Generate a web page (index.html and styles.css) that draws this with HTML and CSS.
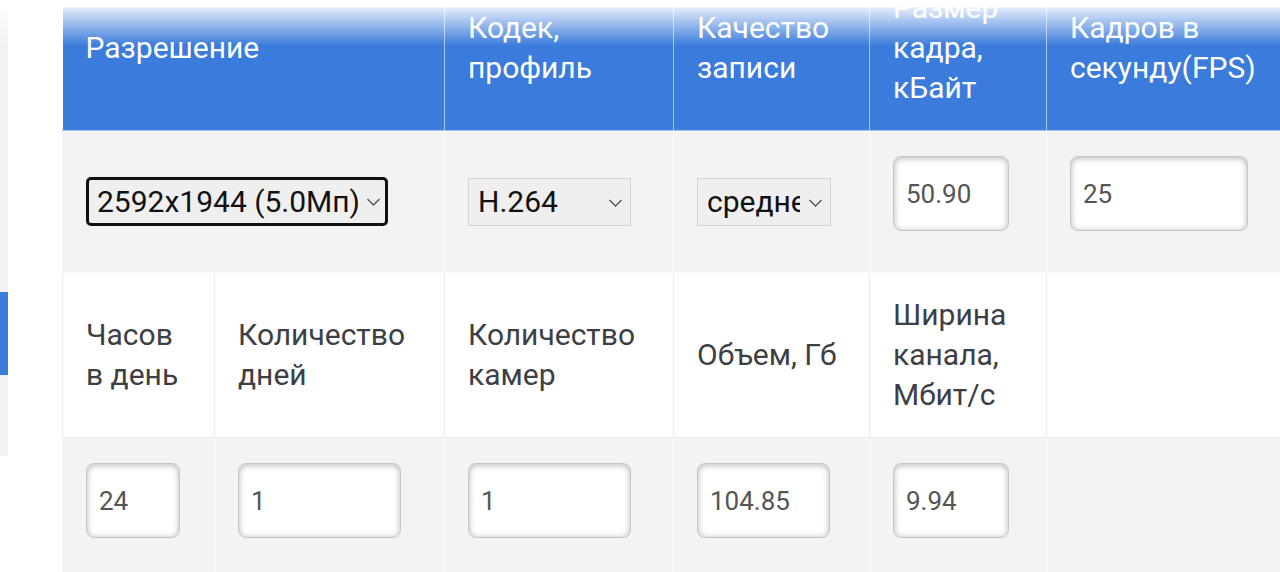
FILE: index.html
```html
<!DOCTYPE html>
<html lang="ru">
<head>
    <meta charset="UTF-8">
    <meta name="viewport" content="width=device-width, initial-scale=1.0">
    <title>Калькулятор архива</title>
    <link rel="stylesheet" href="styles.css">
</head>
<body>
    <div class="fade"></div>
    <aside class="side">
        <div class="side-mark"></div>
    </aside>
    <div class="calc-wrap">
        <table class="calc">
            <colgroup>
                <col class="c1"><col class="c2"><col class="c3"><col class="c4"><col class="c5"><col class="c6">
            </colgroup>
            <tr class="head">
                <th colspan="2">Разрешение</th>
                <th>Кодек, профиль</th>
                <th>Качество записи</th>
                <th>Размер кадра, кБайт</th>
                <th>Кадров в секунду(FPS)</th>
            </tr>
            <tr class="fields">
                <td colspan="2">
                    <div class="select-box focused res">
                        <select>
                            <option>2592x1944 (5.0Мп)</option>
                            <option>1920x1080 (2.0Мп)</option>
                            <option>1280x720 (1.0Мп)</option>
                        </select>
                        <svg class="chev" viewBox="0 0 14 8"><path d="M1 1l6 6 6-6"/></svg>
                    </div>
                </td>
                <td>
                    <div class="select-box codec">
                        <select>
                            <option>H.264</option>
                            <option>H.265</option>
                            <option>MJPEG</option>
                        </select>
                        <svg class="chev" viewBox="0 0 14 8"><path d="M1 1l6 6 6-6"/></svg>
                    </div>
                </td>
                <td>
                    <div class="select-box quality">
                        <select>
                            <option>среднее</option>
                            <option>высокое</option>
                            <option>низкое</option>
                        </select>
                        <svg class="chev" viewBox="0 0 14 8"><path d="M1 1l6 6 6-6"/></svg>
                    </div>
                </td>
                <td><input class="in in-s" type="text" value="50.90"></td>
                <td><input class="in in-lg" type="text" value="25"></td>
            </tr>
            <tr class="labels">
                <td>Часов в&nbsp;день</td>
                <td>Количество дней</td>
                <td>Количество камер</td>
                <td>Объем, Гб</td>
                <td>Ширина канала, Мбит/с</td>
                <td class="blank"></td>
            </tr>
            <tr class="fields">
                <td><input class="in in-xs" type="text" value="24"></td>
                <td><input class="in in-md" type="text" value="1"></td>
                <td><input class="in in-md" type="text" value="1"></td>
                <td><input class="in in-sm" type="text" value="104.85"></td>
                <td><input class="in in-s" type="text" value="9.94"></td>
                <td></td>
            </tr>
        </table>
    </div>
</body>
</html>
```

FILE: styles.css
```css
html, body {
    margin: 0;
    height: 100%;
    overflow: hidden;
}
body {
    font-family: Roboto, "Noto Sans", Arial, sans-serif;
    background: #fff;
    display: flex;
    align-items: flex-start;
}
.fade {
    position: fixed;
    top: 0;
    left: 0;
    right: 0;
    height: 46px;
    background: linear-gradient(to bottom, #fff 0, #fff 7px, rgba(255, 255, 255, 0.85) 8px, rgba(255, 255, 255, 0) 46px);
    pointer-events: none;
    z-index: 5;
}
.side {
    width: 8px;
    height: 451px;
    margin-top: 5px;
    background: #f2f2f2;
    flex: none;
}
.side-mark {
    margin-top: 287px;
    height: 83px;
    background: #3a7bdc;
}
.calc-wrap {
    margin-left: 54px;
    margin-top: 7px;
    flex: 1;
    min-width: 0;
    height: 565px;
    overflow: hidden;
}
.calc {
    margin-top: -41px;
    border-collapse: collapse;
    table-layout: fixed;
    width: 1234px;
    font-size: 30px;
    line-height: 40px;
}
.calc col.c1 { width: 152px; }
.calc col.c2 { width: 230px; }
.calc col.c3 { width: 229px; }
.calc col.c4 { width: 196px; }
.calc col.c5 { width: 177px; }
.calc col.c6 { width: 250px; }

.calc th,
.calc td {
    padding: 22px 24px 22px 23px;
    text-align: left;
    vertical-align: middle;
}
.head th {
    background: #3a7bdc;
    color: #fff;
    font-weight: 400;
    border: 1px solid #a8c4ef;
    border-top: none;
}
.head th:first-child {
    border-left: none;
}
.fields td {
    background: #f3f3f3;
    border: 1px solid #f8f8f8;
}
.labels td {
    background: #fff;
    color: #3c4044;
    border: 1px solid #ececec;
}
.labels td.blank {
    border-left-color: #fff;
}

.select-box {
    position: relative;
    display: inline-block;
    vertical-align: middle;
}
.select-box select {
    -webkit-appearance: none;
    appearance: none;
    display: block;
    box-sizing: border-box;
    height: 48px;
    width: 100%;
    margin: 0;
    padding: 0 30px 0 9px;
    font-family: Roboto, "Noto Sans", Arial, sans-serif;
    font-size: 30px;
    color: #111;
    background: #efefef;
    border: 1px solid #d2d2d2;
    border-radius: 0;
    outline: none;
}
.select-box.focused select {
    height: 49px;
    padding: 0 27px 0 8px;
    border: 3px solid #111;
    border-radius: 5px;
}
.select-box.res { width: 302px; }
.select-box.codec { width: 163px; }
.select-box.quality { width: 134px; }
.chev {
    position: absolute;
    right: 8px;
    top: 21px;
    width: 15px;
    height: 8px;
    fill: none;
    stroke: #555;
    stroke-width: 1.4;
    pointer-events: none;
}
.select-box.focused .chev {
    right: 7px;
}

.in {
    display: block;
    box-sizing: border-box;
    height: 75px;
    margin: 3px 0 19px;
    padding: 0 12px;
    font-family: Roboto, "Noto Sans", Arial, sans-serif;
    font-size: 26px;
    color: #555;
    background: #fff;
    border: 1px solid #c6c6c6;
    border-radius: 8px;
    box-shadow: inset 0 1px 6px rgba(0, 0, 0, 0.3);
    outline: none;
}
.in-xs { width: 94px; }
.in-s { width: 116px; }
.in-sm { width: 133px; }
.in-md { width: 163px; }
.in-lg { width: 178px; }
```
